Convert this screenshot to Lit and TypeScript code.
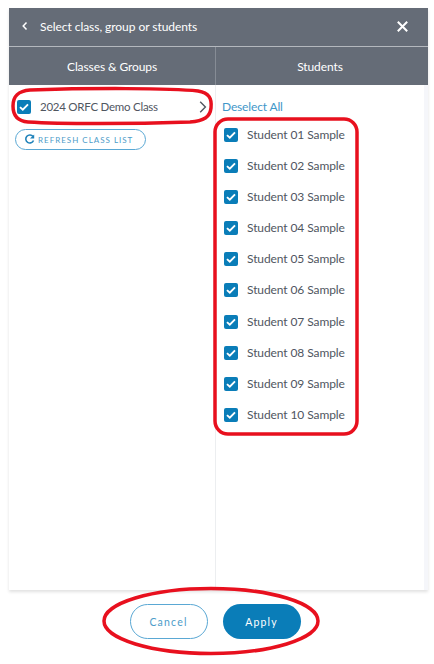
import { LitElement, html, css, svg } from "lit";
import { customElement } from "lit/decorators.js";

const check = html`<span class="cb"><svg width="14" height="14" viewBox="0 0 15 15"><path d="M3.2 7.6 L6.2 10.4 L11.8 4.6" fill="none" stroke="#fff" stroke-width="2"/></svg></span>`;
const students = ["01","02","03","04","05","06","07","08","09","10"];

@customElement("app-root")
export class AppRoot extends LitElement {
  static styles = css`
    :host { display:block; width:434px; height:664px; position:relative; background:#fff; overflow:hidden;
      font-family:"Lato","Open Sans",sans-serif; font-size:12px; color:#50565f; }
    .panel { margin:8px 6px 0 9px; height:582px; display:flex; flex-direction:column; box-shadow:0 2px 3px rgba(0,0,0,.12); background:#fff; }
    .top { background:#656c77; color:#fff; display:flex; align-items:center; padding:0 20px 2px 12px; border-bottom:1px solid #b4b8be; height:36px; }
    .back { margin-right:11px; display:flex; }
    .title { flex:1; letter-spacing:-.05px; }
    .close { display:flex; }
    .heads { height:38px; background:#656c77; color:#fff; display:grid; grid-template-columns:206px 1fr; }
    .heads div { display:flex; align-items:center; justify-content:center; letter-spacing:-.1px; }
    .heads div + div { border-left:1px solid #868c95; padding-right:4px; }
    .cols { flex:1; display:grid; grid-template-columns:207px 1fr; min-height:0; }
    .left { border-right:1px solid #eceef0; padding:14px 8px 0 8px; }
    .right { padding:14px 0 0 6px; background:linear-gradient(to right,#fff 208px,#f5f6fa 208px); }
    .cls { display:flex; align-items:center; height:16px; }
    .cls .name { flex:1; margin-left:9px; font-size:11.5px; letter-spacing:-.25px; padding-bottom:1px; }
    .cb { width:14px; height:14px; background:#0a7db8; border-radius:2px; display:inline-flex; flex:none; }
    .refresh { margin-top:14px; margin-left:-2px; width:131px; height:21px; box-sizing:border-box; border:1px solid #5aa8d4; border-radius:11px; display:flex; align-items:center; padding-left:8px; gap:3px; color:#4d9cc9; font-size:8px; letter-spacing:1px; white-space:nowrap; }
    .desel { color:#3f97c9; line-height:16px; letter-spacing:-.15px; }
    .list { display:flex; flex-direction:column; gap:17.1px; margin-top:13px; padding-left:2px; }
    .st { display:flex; align-items:center; height:14px; gap:9px; letter-spacing:-.1px; }
    .st span:last-child { padding-bottom:1px; }
    .actions { display:flex; justify-content:center; gap:15px; margin-top:14px; padding-right:4px; }
    .btn { width:78px; height:35px; box-sizing:border-box; border-radius:18px; display:flex; align-items:center; justify-content:center; font-size:10.5px; letter-spacing:1.2px; }
    .cancel { border:1px solid #5aa8d4; color:#4d9cc9; background:#fff; }
    .apply { background:#0a7db8; color:#fff; }
    .marks { position:absolute; inset:0; pointer-events:none; }
  `;
  render() {
    return html`
      <div class="panel">
        <div class="top">
          <span class="back"><svg width="8" height="10" viewBox="0 0 8 10"><path d="M5.5 1.5 L2.2 5 L5.5 8.5" fill="none" stroke="#fff" stroke-width="1.5"/></svg></span>
          <span class="title">Select class, group or students</span>
          <span class="close"><svg width="11" height="11" viewBox="0 0 11 11"><path d="M.8 .8 L10.2 10.2 M10.2 .8 L.8 10.2" stroke="#fff" stroke-width="2"/></svg></span>
        </div>
        <div class="heads"><div>Classes &amp; Groups</div><div>Students</div></div>
        <div class="cols">
          <div class="left">
            <div class="cls">${check}<span class="name">2024 ORFC Demo Class</span>
              <svg width="8" height="12" viewBox="0 0 8 12"><path d="M1.2 .8 L6.4 6 L1.2 11.2" fill="none" stroke="#50565f" stroke-width="1.4"/></svg></div>
            <div class="refresh"><svg width="11" height="11" viewBox="0 0 11 11"><path d="M9 2.6 A4 4 0 1 0 9.5 6.5" fill="none" stroke="#1f82ba" stroke-width="1.6"/><path d="M6 4.4 L10.2 4.4 L10.2 .4 Z" fill="#1f82ba"/></svg>REFRESH CLASS LIST</div>
          </div>
          <div class="right">
            <div class="desel">Deselect All</div>
            <div class="list">${students.map(n => html`<div class="st">${check}<span>Student ${n} Sample</span></div>`)}</div>
          </div>
        </div>
      </div>
      <div class="actions">
        <div class="btn cancel">Cancel</div>
        <div class="btn apply">Apply</div>
      </div>
      <svg class="marks" width="434" height="664" viewBox="0 0 434 664" fill="none" stroke="#e8101e" stroke-width="3.5">
        ${svg`<path d="M30 90 C90 88 170 88 198 91 C209 93 212 98 211 108 C210 117 204 121 190 122 C130 124 60 124 28 122 C16 121 13 114 13 106 C13 96 18 91 30 90 Z"/>`}
        ${svg`<rect x="215" y="119" width="142" height="315" rx="13"/>`}
        ${svg`<ellipse cx="211" cy="621" rx="107" ry="32.5"/>`}
      </svg>
    `;
  }
}
